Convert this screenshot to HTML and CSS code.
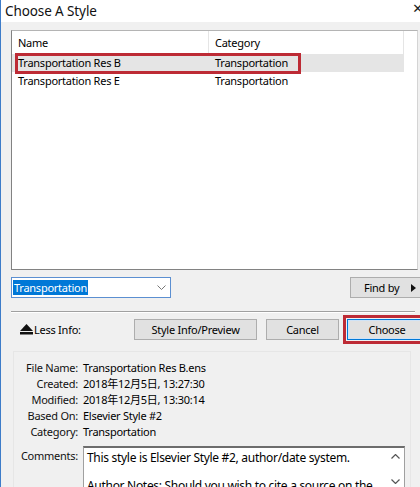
FILE: index.html
```html
<!DOCTYPE html>
<html lang="en">
<head>
<meta charset="utf-8"/>
<title>Choose A Style</title>
<link rel="stylesheet" href="styles.css">
</head>
<body>
<div class="window">
  <div class="titlebar">
    <span class="title">Choose A Style</span>
    <span class="close">✕</span>
  </div>
  <div class="content">
    <div class="list">
      <div class="list-head">
        <div class="cell name">Name</div>
        <div class="cell cat">Category</div>
        <div class="cell rest"></div>
      </div>
      <div class="row selected">
        <div class="cell name">Transportation Res B</div>
        <div class="cell cat">Transportation</div>
        <span class="mark"></span>
      </div>
      <div class="row">
        <div class="cell name">Transportation Res E</div>
        <div class="cell cat">Transportation</div>
      </div>
    </div>

    <div class="filter">
      <div class="combo">
        <span class="combo-text">Transportation</span>
        <svg class="chev" width="9" height="5" viewBox="0 0 9 5"><path d="M0.5 0.5L4.5 4.5L8.5 0.5" fill="none" stroke="#777" stroke-width="1"/></svg>
      </div>
      <div class="findby">Find by
        <svg class="tri" width="5" height="8" viewBox="0 0 5 8"><path d="M0 0L5 4L0 8Z" fill="#111"/></svg>
      </div>
    </div>

    <div class="sep"></div>

    <div class="actions">
      <div class="less">
        <svg width="13" height="11" viewBox="0 0 13 11"><path d="M6.5 0L13 7H0Z" fill="#111"/><rect x="0" y="8" width="13" height="2.5" fill="#111"/></svg>
        <span>Less Info:</span>
      </div>
      <div class="btn preview">Style Info/Preview</div>
      <div class="btn cancel">Cancel</div>
      <div class="btn choose">Choose</div>
    </div>

    <div class="info">
      <div class="fields">
        <span class="lbl">File Name:</span><span class="val">Transportation Res B.ens</span>
        <span class="lbl">Created:</span><span class="val">2018年12月5日, 13:27:30</span>
        <span class="lbl">Modified:</span><span class="val">2018年12月5日, 13:30:14</span>
        <span class="lbl">Based On:</span><span class="val">Elsevier Style #2</span>
        <span class="lbl">Category:</span><span class="val">Transportation</span>
      </div>
      <div class="comments">
        <span class="lbl">Comments:</span>
        <div class="memo">
          <div class="memo-text">
            <p>This style is Elsevier Style #2, author/date system.</p>
            <p>Author Notes: Should you wish to cite a source on the</p>
          </div>
          <div class="scroll">
            <svg width="9" height="5" viewBox="0 0 9 5"><path d="M0.5 4.5L4.5 0.5L8.5 4.5" fill="none" stroke="#555" stroke-width="1.2"/></svg>
            <svg width="9" height="5" viewBox="0 0 9 5"><path d="M0.5 0.5L4.5 4.5L8.5 0.5" fill="none" stroke="#555" stroke-width="1.2"/></svg>
          </div>
        </div>
      </div>
    </div>
  </div>
</div>
</body>
</html>
```

FILE: styles.css
```css
html, body { margin: 0; padding: 0; }
body {
  width: 420px;
  height: 487px;
  overflow: hidden;
  background: #f0f0f0;
  font-family: "Noto Sans", "Noto Sans CJK SC", sans-serif;
  font-size: 11px;
  letter-spacing: -0.25px;
  color: #000;
}
.window {
  width: 419px;
  border-left: 1px solid #3d7cc9;
  display: flex;
  flex-direction: column;
}
.window > *, .content > *, .actions > *, .filter > * { flex-shrink: 0; }
.titlebar {
  height: 22px;
  background: #fff;
  display: flex;
  align-items: center;
  justify-content: space-between;
  padding-left: 4px;
}
.title { font-size: 13.5px; letter-spacing: -0.1px; color: #111; }
.close {
  font-family: "DejaVu Sans", sans-serif;
  font-size: 13px;
  line-height: 13px;
  color: #222;
  margin-right: -3px;
  margin-top: -6px;
}

.content { padding-left: 10px; display: flex; flex-direction: column; }

/* list */
.list {
  margin-top: 8px;
  width: 407px;
  height: 240px;
  box-sizing: border-box;
  background: #fff;
  border: 1px solid #828282;
  border-top-color: #b4b4b4;
  border-right-color: #d4d4d4;
}
.list-head, .row { display: flex; }
.list-head { height: 23px; align-items: center; }
.list-head .cell { border-right: 1px solid #e5e5e5; height: 23px; line-height: 23px; }
.list-head .rest { border-right: none; }
.cell { box-sizing: border-box; padding-left: 6px; white-space: nowrap; flex-shrink: 0; }
.cell.name { width: 197px; }
.cell.cat { width: 195px; }
.row { height: 18px; line-height: 18px; position: relative; }
.row.selected .cell { background: #e5e5e5; }
.mark {
  position: absolute;
  left: 3px;
  top: -1px;
  width: 286px;
  height: 21px;
  box-sizing: border-box;
  border: 3px solid #bd2b35;
}

/* filter row */
.filter {
  margin-top: 7px;
  display: flex;
  justify-content: space-between;
  width: 419px;
  height: 21px;
}
.combo {
  width: 160px;
  box-sizing: border-box;
  background: #fff;
  border: 1px solid #5b8fd1;
  display: flex;
  align-items: center;
  justify-content: space-between;
  padding: 0 4px 0 1px;
}
.combo-text { background: #0078d7; color: #fff; line-height: 15px; padding: 0 1px; }
.findby {
  width: 80px;
  box-sizing: border-box;
  background: #e1e1e1;
  border: 1px solid #adadad;
  display: flex;
  align-items: center;
  padding-left: 13px;
  gap: 12px;
}

.sep {
  margin-top: 13px;
  width: 404px;
  height: 1px;
  background: #a0a0a0;
  border-bottom: 1px solid #fff;
}

/* action row */
.actions {
  margin-top: 6px;
  display: flex;
  align-items: center;
  height: 21px;
}
.less { display: flex; align-items: center; gap: 1px; width: 123px; padding-left: 9px; box-sizing: border-box; }
.btn {
  height: 21px;
  box-sizing: border-box;
  background: #e1e1e1;
  border: 1px solid #adadad;
  text-align: center;
  line-height: 19px;
}
.preview { width: 123px; }
.cancel { width: 73px; margin-left: 9px; }
.choose {
  width: 80px;
  margin-left: 8px;
  border: 1px solid #0078d7;
  box-shadow: inset 0 0 0 1px #cfe3f7;
  outline: 3px solid #bd2b35;
  outline-offset: 1px;
}

/* info panel */
.info {
  margin-top: 11px;
  margin-left: 2px;
  width: 396px;
  height: 200px;
  border-top: 1px solid #e6e6e6;
  border-left: 1px solid #e6e6e6;
  border-right: 1px solid #e6e6e6;
  padding-top: 8px;
}
.fields {
  display: grid;
  grid-template-columns: 64px auto;
  column-gap: 5px;
  line-height: 16px;
}
.lbl { text-align: right; color: #111; }
.comments {
  margin-top: 6px;
  display: grid;
  grid-template-columns: 64px auto;
  column-gap: 5px;
}
.comments .lbl { line-height: 20px; }
.memo {
  width: 322px;
  height: 60px;
  box-sizing: border-box;
  background: #fff;
  border: 1px solid #a0a0a0;
  border-top: 2px solid #6d6d6d;
  display: flex;
  justify-content: space-between;
}
.memo-text { padding: 1px 0 0 3px; font-size: 12px; letter-spacing: -0.3px; }
.memo-text p { margin: 0 0 11px 0; line-height: 17px; white-space: nowrap; }
.scroll {
  width: 17px;
  display: flex;
  flex-direction: column;
  align-items: center;
  gap: 20px;
  padding-top: 6px;
  background: #fff;
}
```
